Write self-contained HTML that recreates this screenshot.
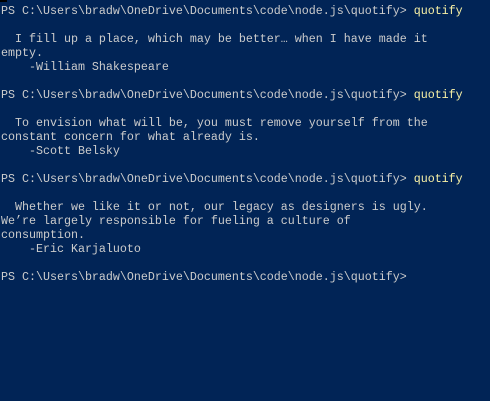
<!DOCTYPE html>
<html><head><style>
html,body{margin:0;padding:0;background:#012456;width:490px;height:401px;overflow:hidden}
pre{margin:0;position:absolute;left:1px;top:4px;font-family:"Liberation Mono",monospace;font-size:11.67px;line-height:14px;color:#cccccc;white-space:pre}
.y{color:#f9f1a5}
.c{position:absolute;left:0;top:0;width:7px;height:2px;background:#000}
</style></head><body>
<div class="c"></div>
<pre>PS C:\Users\bradw\OneDrive\Documents\code\node.js\quotify&gt; <span class="y">quotify</span>

  I fill up a place, which may be better… when I have made it
empty.
    -William Shakespeare

PS C:\Users\bradw\OneDrive\Documents\code\node.js\quotify&gt; <span class="y">quotify</span>

  To envision what will be, you must remove yourself from the
constant concern for what already is.
    -Scott Belsky

PS C:\Users\bradw\OneDrive\Documents\code\node.js\quotify&gt; <span class="y">quotify</span>

  Whether we like it or not, our legacy as designers is ugly.
We’re largely responsible for fueling a culture of
consumption.
    -Eric Karjaluoto

PS C:\Users\bradw\OneDrive\Documents\code\node.js\quotify&gt;</pre>
</body></html>
